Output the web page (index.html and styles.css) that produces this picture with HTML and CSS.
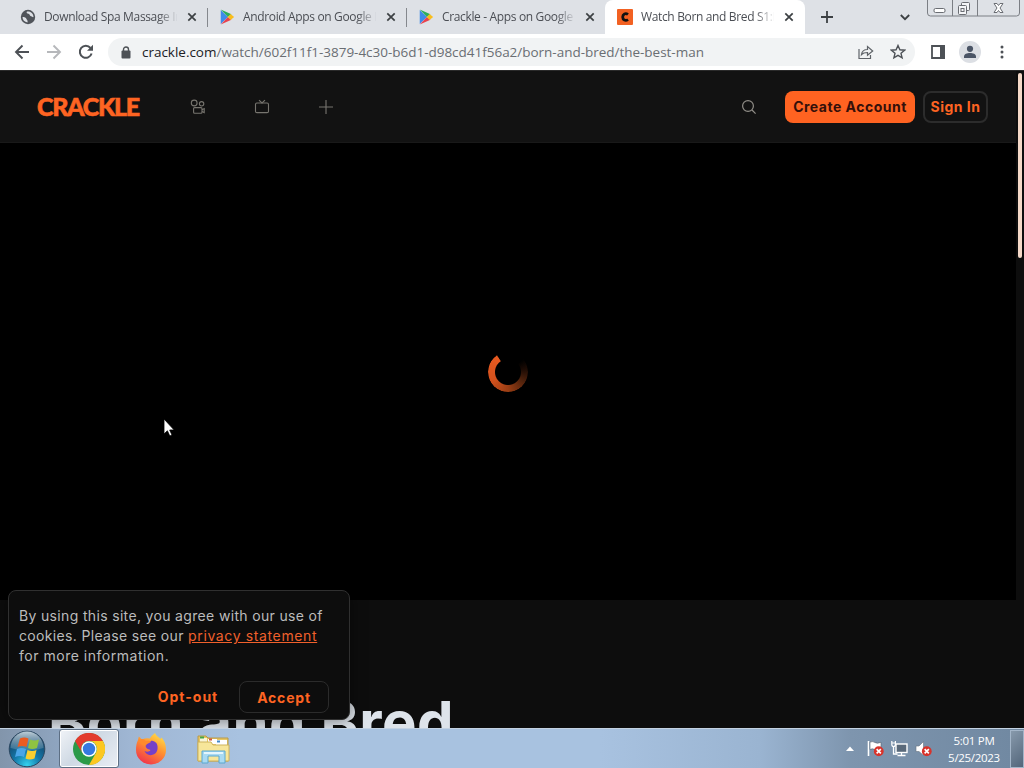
FILE: index.html
```html
<!DOCTYPE html>
<html lang="en">
<head>
    <meta charset="UTF-8">
    <meta name="viewport" content="width=device-width, initial-scale=1.0">
    <title>Watch Born and Bred</title>
    <link rel="stylesheet" href="styles.css">
</head>
<body>
    <!-- shared shapes -->
    <svg class="defs" width="0" height="0">
        <symbol id="play" viewBox="0 0 16 18">
            <path d="M1 1v16l8-8z" fill="#3f8be8"/>
            <path d="M1 1l8 8 3.500-3z" fill="#e8434f" opacity="0"/>
            <path d="M1 .5l8 8.500 4-3z" fill="#2fae5c"/>
            <path d="M1 17.500l8-8.500 4 3z" fill="#e8434f"/>
            <path d="M12 5.500l4 3.500-4 3.500L9 9z" fill="#f9bd1c"/>
        </symbol>
        <symbol id="close" viewBox="0 0 10 10">
            <path d="M1.300 1.300l7.400 7.400M8.700 1.300l-7.400 7.400" stroke="#3c4043" stroke-width="1.700"/>
        </symbol>
        <symbol id="denied" viewBox="0 0 10 10">
            <circle cx="5" cy="5" r="4.700" fill="#d8332b"/>
            <path d="M3 3l4 4M7 3l-4 4" stroke="#fff" stroke-width="1.600"/>
        </symbol>
    </svg>

    <!-- Browser tabs -->
    <div class="tabs">
        <div class="tab">
            <svg class="favicon" viewBox="0 0 16 16"><circle cx="8" cy="8" r="7.200" fill="#50545a"/><path d="M2.500 8c2 0 3.500.5 4 2s1.500 1 1 3.500C4.500 13 2.500 11 2.500 8zM7 2.500c-1 1 0 2 1.500 2.200S9.500 7 11 7.200s1.500 1.300 2.500.8C13.500 5 11 2 7 2.500z" fill="#dee1e6"/></svg>
            <span class="tab-title">Download Spa Massage Ir</span>
            <svg class="tab-close"><use href="#close"/></svg>
        </div>
        <div class="tab">
            <svg class="favicon"><use href="#play"/></svg>
            <span class="tab-title">Android Apps on Google P</span>
            <svg class="tab-close"><use href="#close"/></svg>
        </div>
        <div class="tab">
            <svg class="favicon"><use href="#play"/></svg>
            <span class="tab-title">Crackle - Apps on Google P</span>
            <svg class="tab-close"><use href="#close"/></svg>
        </div>
        <div class="tab active">
            <svg class="favicon" viewBox="0 0 16 16"><rect width="16" height="16" rx="1" fill="#f26122"/><path d="M11 5.500C8.500 3.600 5.700 5 5.700 8s2.800 4.400 5.300 2.500" fill="none" stroke="#111" stroke-width="2.800"/></svg>
            <span class="tab-title">Watch Born and Bred S1:E</span>
            <svg class="tab-close"><use href="#close"/></svg>
        </div>
        <svg class="new-tab" viewBox="0 0 12 12"><path d="M6 0v12M0 6h12" stroke="#3c4043" stroke-width="1.800"/></svg>
        <svg class="tab-search" viewBox="0 0 10 7"><path d="M.8 1l4.200 4.200L9.200 1" fill="none" stroke="#3c4043" stroke-width="1.800"/></svg>
        <svg class="window-buttons" viewBox="0 0 93 18">
            <path d="M.5 0v13q0 3 3 3h86q3 0 3-3V0M25.500 0v16M50.500 0v16" fill="none" stroke="#7b7e84"/>
            <rect x="7" y="8.500" width="11" height="4" rx="1.500" fill="#fff" stroke="#6a6d73"/>
            <g fill="#f4f5f7" stroke="#6a6d73"><rect x="34.500" y="2.500" width="8" height="8" rx="1"/><rect x="31.500" y="5.500" width="8" height="9" rx="1"/><rect x="34" y="8.500" width="3" height="3"/></g>
            <path d="M67 3.500h3l1.500 2 1.500-2h3L73 8l3 4.500h-3l-1.500-2-1.500 2h-3L70 8z" fill="#fff" stroke="#6a6d73"/>
        </svg>
    </div>

    <!-- Address bar -->
    <div class="toolbar">
        <svg class="nav-icons" viewBox="0 0 48 18" fill="none" stroke-width="1.900">
            <path d="M15 9H2M8.500 2.500L2 9l6.500 6.500" stroke="#4d5156"/>
            <path d="M33 9h13M39.500 2.500L46 9l-6.500 6.500" stroke="#b6b8bb"/>
        </svg>
        <svg class="reload" viewBox="0 0 16 16"><path d="M13.600 9.500A6 6 0 1 1 12.500 4" fill="none" stroke="#4d5156" stroke-width="2"/><path d="M15 .8v6H9z" fill="#4d5156"/></svg>
        <div class="omnibox">
            <svg class="lock" viewBox="0 0 10 13"><rect x=".5" y="4.500" width="9" height="8" rx="1" fill="#4d5156"/><path d="M2.500 5V3.500a2.500 2.500 0 0 1 5 0V5" fill="none" stroke="#4d5156" stroke-width="1.400"/></svg>
            <span class="url"><b>crackle.com</b>/watch/602f11f1-3879-4c30-b6d1-d98cd41f56a2/born-and-bred/the-best-man</span>
            <svg class="share" viewBox="0 0 16 16" fill="none" stroke="#5f6368" stroke-width="1.200"><path d="M1 5v9.500h11.500V11M3.500 10.500c.5-3.500 2.500-5 6-5V2.500L14.700 7l-5.200 4.200V8.500c-2.500 0-4.500.3-6 2z"/></svg>
            <svg class="star" viewBox="0 0 16 16"><path d="M8 1.500l1.900 4.300 4.700.4-3.600 3.100 1.100 4.600L8 11.400l-4.100 2.500L5 9.300 1.400 6.200l4.700-.4z" fill="none" stroke="#4d5156" stroke-width="1.400"/></svg>
        </div>
        <svg class="side-panel" viewBox="0 0 14 14"><path d="M1 1h12v12H1z" fill="#fff" stroke="#4d5156" stroke-width="1.800"/><path d="M9 0h5v14H9z" fill="#4d5156"/></svg>
        <svg class="profile" viewBox="0 0 22 22"><circle cx="11" cy="11" r="11" fill="#dcdfe4"/><circle cx="11" cy="7.800" r="3.100" fill="#4b5566"/><path d="M5 17v-1.500c0-2.500 3-3.500 6-3.500s6 1 6 3.500V17z" fill="#4b5566"/></svg>
        <svg class="more" viewBox="0 0 4 14" fill="#4d5156"><circle cx="2" cy="2" r="1.500"/><circle cx="2" cy="7" r="1.500"/><circle cx="2" cy="12" r="1.500"/></svg>
    </div>

    <!-- Page -->
    <div class="page">
        <div class="site">
            <div class="site-header">
                <div class="logo">CRACKLE</div>
                <svg class="menu-icon" viewBox="0 0 16 16" fill="none" stroke="#77756f" stroke-width="1.100"><circle cx="4.200" cy="4" r="2.900"/><circle cx="11.600" cy="4.800" r="2.200"/><rect x="3.600" y="8.600" width="8.400" height="5.600" rx="1"/><path d="M12 10.800l2.200-1.200v4L12 12.500"/></svg>
                <svg class="menu-icon" viewBox="0 0 16 16" fill="none" stroke="#77756f" stroke-width="1.100"><rect x="1.500" y="4" width="13" height="9.600" rx="1.400"/><path d="M5 1.200L8 4l3-2.800"/></svg>
                <svg class="menu-icon" viewBox="0 0 16 16"><path d="M8 1v14M1 8h14" stroke="#77756f" stroke-width="1.100"/></svg>
                <svg class="search" viewBox="0 0 16 16" fill="none" stroke="#918e88" stroke-width="1.200"><circle cx="7" cy="7" r="5.400"/><path d="M11 11l3.600 3.600"/></svg>
                <button class="create">Create Account</button>
                <button class="sign-in">Sign In</button>
            </div>
            <div class="video">
                <div class="spinner"></div>
            </div>
            <h1 class="show-title">Born and Bred</h1>
        </div>
        <div class="scrollbar"></div>

        <div class="cookies">
            <p>By using this site, you agree with our use of<br>cookies. Please see our <a href="#">privacy statement</a><br><span class="last-line">for more information.</span></p>
            <div class="cookie-buttons">
                <button class="opt-out">Opt-out</button>
                <button class="accept">Accept</button>
            </div>
        </div>
        <svg class="cursor" viewBox="0 0 12 19"><path d="M1 1v15l3.400-3.200L6.800 18l2.200-1-2.300-5h4.500z" fill="#fff" stroke="#000" stroke-width=".8"/></svg>
    </div>

    <!-- Taskbar -->
    <div class="taskbar">
        <svg class="start" viewBox="0 0 38 38">
            <defs>
                <radialGradient id="orb" cx=".5" cy=".95" r=".85"><stop offset="0" stop-color="#35d2ee"/><stop offset=".45" stop-color="#1377a8"/><stop offset="1" stop-color="#153c5e"/></radialGradient>
                <linearGradient id="shine" x2="0" y2="1"><stop offset="0" stop-color="#dbe8ef" stop-opacity=".85"/><stop offset="1" stop-color="#8fb0c2" stop-opacity=".25"/></linearGradient>
            </defs>
            <circle cx="19" cy="19" r="17.800" fill="url(#orb)" stroke="#2b4760"/>
            <path d="M2.500 18a16.500 16.500 0 0 1 33 0q-16 5-33 0z" fill="url(#shine)"/>
            <path d="M12 8.500q4-2 8.500 0L18.500 17q-4.500-2-9 0z" fill="#ea5b22"/>
            <path d="M22 9.500q4.500 2 9 0L29 18q-5 2-9 0z" fill="#8fc341"/>
            <path d="M9 19q4.500-2 9 0l-2 8q-4-2-9 0z" fill="#4aa5e8"/>
            <path d="M19.500 20q4.500 2 9 0L26.500 28.500q-5 2-9 0z" fill="#fbce2e"/>
        </svg>
        <div class="task-active">
            <svg viewBox="0 0 32 32">
                <circle cx="16" cy="16" r="16" fill="#2b9a48"/>
                <path d="M2.100 8A16 16 0 0 1 29.900 8H16a8 8 0 0 0-6.900 12z" fill="#e33b2e"/>
                <path d="M29.900 8A16 16 0 0 1 16 32l6.900-12A8 8 0 0 0 16 8z" fill="#fcc720"/>
                <circle cx="16" cy="16" r="7.700" fill="#fff"/><circle cx="16" cy="16" r="6.200" fill="#3579e0"/>
            </svg>
        </div>
        <svg class="firefox" viewBox="0 0 32 32">
            <defs><linearGradient id="fox" x1=".8" y1="0" x2=".25" y2="1"><stop offset="0" stop-color="#ffe14a"/><stop offset=".45" stop-color="#ff9130"/><stop offset="1" stop-color="#f0304d"/></linearGradient></defs>
            <path d="M20 0c1 3 4 4 5.500 6l.8-1.500C30 8 31 12 31 17a15 14.500 0 0 1-30 0c0-4 .5-7 2-10l.8-3.500L7 6.500q4-2 8-1C16 3 18 1.500 20 0z" fill="url(#fox)"/>
            <path d="M11 10c4 0 4-3 7-2 4 1 5 4.500 4.500 8a6.800 6.800 0 0 1-13 2c2 1 5 1 6-1-3-1-6-2-4.500-7z" fill="#7540c8"/>
            <path d="M4 7c3-2 5-1 7 1 1.500-.5 4-.5 5 .5-1 2-4 1.500-5 4-4 .5-6-2-7-5.500z" fill="#ff8a2b"/>
        </svg>
        <svg class="explorer" viewBox="0 0 34 32">
            <path d="M2 3h8l2 2h20v23H2z" fill="#e8c763" stroke="#b79a4a"/>
            <path d="M4 5h7v4H4z" fill="#f9f5d8"/><path d="M4 3.500h4v2H4z" fill="#45a64b"/>
            <path d="M12 6h9v5h-9z" fill="#fff"/><path d="M13 5.500h3v2h-3z" fill="#d2553a"/>
            <path d="M20 7h11v5H20z" fill="#fff"/><path d="M21 7.500h3v2h-3z" fill="#4389ca"/>
            <path d="M2 9h13l2 3h16v16H2z" fill="#f7e69a" stroke="#ceb35c"/>
            <path d="M6 30V18h23v12h-6v-7H12v7z" fill="#a9daf2" stroke="#5ba8d0"/>
            <path d="M8 20h19" stroke="#e4f6fd" stroke-width="2"/>
        </svg>
        <div class="tray">
            <svg class="tray-up" viewBox="0 0 8 5"><path d="M0 5l4-4.500L8 5z" fill="#fff"/></svg>
            <svg class="tray-icon" viewBox="0 0 17 17"><path d="M1.500 1v15" stroke="#fff" stroke-width="1.600"/><path d="M3 2q3-1 5 .5t6-.2v7q-3 1.500-6 .2t-5 0z" fill="#fff" stroke="#55606b" stroke-width=".6"/><use href="#denied" x="6.500" y="6" width="10.500" height="10.500"/></svg>
            <svg class="tray-icon" viewBox="0 0 17 17"><rect x="5" y="4" width="11" height="8.500" fill="#59697a" stroke="#fff" stroke-width="1.400"/><path d="M10.500 13v2.500M6.500 15.500h8M2.500 7v7h4" fill="none" stroke="#fff" stroke-width="1.300"/><path d="M.8 1v3.500q0 2 1.800 2t1.800-2V1M.5 3h4" fill="none" stroke="#fff" stroke-width="1.200"/></svg>
            <svg class="tray-icon" viewBox="0 0 17 17"><path d="M1 6h3l4.500-4.500v14L4 11.500H1z" fill="#fff" stroke="#667280" stroke-width=".6"/><use href="#denied" x="6.500" y="6" width="10.500" height="10.500"/></svg>
        </div>
        <div class="clock">5:01 PM<br>5/25/2023</div>
        <div class="show-desktop"></div>
    </div>
</body>
</html>
```
FILE: styles.css
```css
html, body {
    height: 100%;
    margin: 0;
    padding: 0;
    overflow: hidden;
    background: #000;
}
body {
    width: 1024px;
    height: 768px;
    display: flex;
    flex-direction: column;
    font-family: "Open Sans", "Noto Sans", sans-serif;
}
svg {
    display: block;
    flex-shrink: 0;
}
.defs {
    position: absolute;
}

/* tabs */
.tabs {
    display: flex;
    align-items: center;
    height: 34px;
    padding-left: 9px;
    background: #dee1e6;
    flex-shrink: 0;
}
.tab {
    display: flex;
    align-items: center;
    width: 199px;
    height: 34px;
    box-sizing: border-box;
    padding-left: 11px;
    background: linear-gradient(#85888d, #85888d) right 0 top 8px / 1px 19px no-repeat;
}
.tab:nth-child(3) {
    width: 198px;
    background: none;
}
.favicon {
    width: 16px;
    height: 16px;
}
.tab-title {
    width: 133px;
    margin-left: 8px;
    overflow: hidden;
    white-space: nowrap;
    font-size: 12px;
    letter-spacing: -0.35px;
    line-height: 34px;
    color: #4b4e54;
    -webkit-mask-image: linear-gradient(to right, #000 114px, transparent 134px);
    mask-image: linear-gradient(to right, #000 114px, transparent 134px);
}
.tab-close {
    width: 10px;
    height: 10px;
    margin-left: 10px;
}
.tab.active {
    width: 200px;
    padding-left: 12px;
    background: #fff;
    border-radius: 8px 8px 0 0;
}
.new-tab {
    width: 12px;
    height: 12px;
    margin-left: 16px;
}
.tab-search {
    width: 10px;
    height: 7px;
    margin-left: 67px;
}
.window-buttons {
    width: 93px;
    height: 18px;
    margin-left: 17px;
    align-self: flex-start;
}

/* toolbar */
.toolbar {
    display: flex;
    align-items: center;
    height: 36px;
    padding-left: 14px;
    background: #fff;
    border-bottom: 1px solid #2a2a2a;
    flex-shrink: 0;
}
.nav-icons {
    width: 48px;
    height: 18px;
}
.reload {
    width: 16px;
    height: 16px;
    margin-left: 16px;
}
.omnibox {
    display: flex;
    align-items: center;
    width: 807px;
    height: 28px;
    margin-left: 14px;
    border-radius: 14px;
    background: #f1f3f4;
}
.lock {
    width: 10px;
    height: 13px;
    margin-left: 13px;
}
.url {
    width: 706px;
    margin-left: 11px;
    font-size: 13.5px;
    letter-spacing: -0.02px;
    white-space: nowrap;
    color: #6a6e73;
}
.url b {
    font-weight: 400;
    color: #202124;
}
.share {
    width: 16px;
    height: 16px;
    margin-left: 10px;
}
.star {
    width: 16px;
    height: 16px;
    margin-left: 16px;
}
.side-panel {
    width: 14px;
    height: 14px;
    margin-left: 16px;
}
.profile {
    width: 22px;
    height: 22px;
    margin-left: 14px;
}
.more {
    width: 4px;
    height: 14px;
    margin-left: 19px;
}

/* page */
.page {
    position: relative;
    display: flex;
    height: 657px;
    overflow: hidden;
    background: #0d0d0d;
    font-family: Inter, sans-serif;
}
.site {
    width: 1016px;
}
.site-header {
    display: flex;
    align-items: center;
    height: 71px;
    padding-left: 37px;
    background: #121212;
    border-bottom: 1px solid #191919;
}
.logo {
    width: 153px;
    margin-top: -1px;
    font-family: Lato, sans-serif;
    font-weight: 900;
    font-size: 25px;
    letter-spacing: -1.3px;
    -webkit-text-stroke: 0.6px #fe6422;
    color: #fe6422;
}
.menu-icon {
    width: 16px;
    height: 16px;
    margin-right: 48px;
}
.search {
    width: 16px;
    height: 16px;
    margin-left: 359px;
}
button {
    box-sizing: border-box;
    padding: 0;
    border: none;
    border-radius: 8px;
    font-family: Inter, sans-serif;
    font-size: 14px;
    font-weight: 700;
    letter-spacing: 0.5px;
    color: #fe6422;
    background: none;
    white-space: nowrap;
    cursor: pointer;
}
.create {
    width: 130px;
    height: 32px;
    margin-left: 28px;
    color: #35100a;
    background: #ff6321;
}
.sign-in {
    width: 65px;
    height: 32px;
    margin-left: 8px;
    border: 2px solid #2c2c2c;
}
.video {
    display: flex;
    align-items: center;
    justify-content: center;
    height: 457px;
    background: #000;
}
.spinner {
    width: 40px;
    height: 40px;
    border-radius: 50%;
    background: conic-gradient(transparent 0 50deg, #1c0b04 80deg, #4d210c 120deg, #9a3e14 180deg, #d3511d 240deg, #e85a20 325deg, transparent 328deg);
    -webkit-mask-image: radial-gradient(circle, transparent 12.5px, #000 13.5px);
    mask-image: radial-gradient(circle, transparent 12.5px, #000 13.5px);
}
.show-title {
    margin: 87px 0 0 48px;
    font-size: 58px;
    line-height: 70px;
    font-weight: 700;
    letter-spacing: 0.5px;
    white-space: nowrap;
    color: #dde3ea;
}
.scrollbar {
    width: 4px;
    height: 185px;
    margin: 2px 0 0 2px;
    border-radius: 2px;
    background: #f5d9c8;
}
.cookies {
    position: absolute;
    left: 8px;
    top: 519px;
    width: 342px;
    height: 130px;
    box-sizing: border-box;
    padding: 15px 20px 0 10px;
    border: 1px solid #303030;
    border-radius: 8px;
    background: #0d0d0d;
    box-shadow: 0 0 16px rgba(0, 0, 0, 0.5);
}
.cookies p {
    margin: 0;
    font-size: 14px;
    line-height: 20px;
    letter-spacing: 0.34px;
    white-space: nowrap;
    color: #bcbcbc;
}
.cookies a {
    letter-spacing: 0.63px;
    color: #f0602c;
}
.cookies .last-line {
    letter-spacing: 0.52px;
}
.cookie-buttons {
    display: flex;
    justify-content: flex-end;
    margin-top: 15px;
}
.opt-out {
    width: 84px;
    height: 30px;
    letter-spacing: 1px;
}
.accept {
    width: 90px;
    height: 32px;
    margin-left: 9px;
    border: 1px solid #2b2b2b;
    letter-spacing: 0.8px;
}
.cursor {
    position: absolute;
    left: 163px;
    top: 347px;
    width: 12px;
    height: 19px;
}

/* taskbar */
.taskbar {
    display: flex;
    align-items: center;
    height: 39px;
    border-top: 1px solid #c3d2e2;
    background: linear-gradient(to right, #8295ab 0, #8fa5c0 60px, #9fb6d3 130px, #a8c2e0 240px, #a8c2e0 600px, #9ab4d1 760px, #7e95ae 850px, #7088a1 1024px);
    flex-shrink: 0;
}
.start {
    width: 38px;
    height: 38px;
    margin-left: 8px;
}
.task-active {
    display: flex;
    align-items: center;
    justify-content: center;
    width: 60px;
    height: 39px;
    box-sizing: border-box;
    margin-left: 13px;
    border: 1px solid #5d6f84;
    border-radius: 3px;
    background: linear-gradient(135deg, #f0f3f7, #cfd9e4 45%, #e9eef4);
    box-shadow: inset 0 0 0 1px #fff;
}
.task-active svg {
    width: 32px;
    height: 32px;
}
.firefox {
    width: 32px;
    height: 32px;
    margin-left: 16px;
}
.explorer {
    width: 34px;
    height: 32px;
    margin-left: 29px;
}
.tray {
    display: flex;
    align-items: center;
    margin-left: auto;
}
.tray-up {
    width: 8px;
    height: 5px;
    margin-right: 13px;
}
.tray-icon {
    width: 17px;
    height: 17px;
    margin-right: 7px;
}
.clock {
    width: 64px;
    margin-left: 3px;
    font-size: 11.5px;
    line-height: 17px;
    letter-spacing: -0.3px;
    text-align: center;
    white-space: nowrap;
    color: #fff;
}
.show-desktop {
    width: 14px;
    height: 38px;
    box-sizing: border-box;
    margin-left: 4px;
    border: 1px solid #a3b5c8;
    background: linear-gradient(135deg, #8799ab, #53667b);
}
```
